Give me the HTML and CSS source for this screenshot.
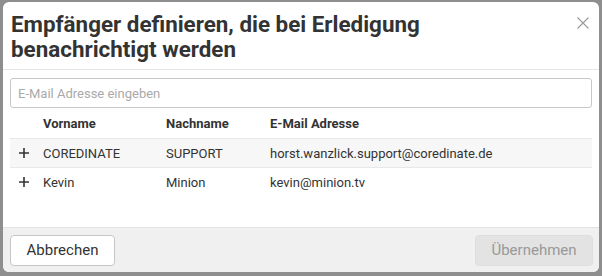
FILE: index.html
```html
<!DOCTYPE html>
<html lang="de">
<head>
<meta charset="utf-8">
<link rel="stylesheet" href="styles.css">
</head>
<body>
<div class="dialog">
  <div class="dlg-header">
    <h1 class="dlg-title">Empfänger definieren, die bei Erledigung benachrichtigt werden</h1>
    <button class="close" aria-label="Schließen">
      <svg width="12" height="12" viewBox="0 0 12 12"><path d="M0.5 0.5 L11.5 11.5 M11.5 0.5 L0.5 11.5" stroke="#9a9a9a" stroke-width="1.1" fill="none"/></svg>
    </button>
  </div>
  <div class="dlg-body">
    <input class="email-input" type="text" placeholder="E-Mail Adresse eingeben">
    <table class="people">
      <thead>
        <tr><th class="c-add"></th><th class="c-first">Vorname</th><th class="c-last">Nachname</th><th>E-Mail Adresse</th></tr>
      </thead>
      <tbody>
        <tr class="odd"><td class="c-add"><svg class="plus" width="10" height="10" viewBox="0 0 10 10"><path d="M5 0 V10 M0 5 H10" stroke="#333" stroke-width="1.6" fill="none"/></svg></td><td>COREDINATE</td><td>SUPPORT</td><td>horst.wanzlick.support@coredinate.de</td></tr>
        <tr><td class="c-add"><svg class="plus" width="10" height="10" viewBox="0 0 10 10"><path d="M5 0 V10 M0 5 H10" stroke="#333" stroke-width="1.6" fill="none"/></svg></td><td>Kevin</td><td>Minion</td><td>kevin@minion.tv</td></tr>
      </tbody>
    </table>
  </div>
  <div class="dlg-footer">
    <button class="btn btn-cancel">Abbrechen</button>
    <button class="btn btn-apply" disabled>Übernehmen</button>
  </div>
</div>
</body>
</html>
```
FILE: styles.css
```css
html, body {
  margin: 0;
  padding: 0;
}
body {
  width: 602px;
  height: 276px;
  background: #8e8e8e;
  font-family: Roboto, "Liberation Sans", sans-serif;
  overflow: hidden;
}
.dialog {
  margin: 2px 3px 0 3px;
  width: 596px;
  height: 270px;
  background: #fff;
  border-radius: 6px;
  display: flex;
  flex-direction: column;
  overflow: hidden;
}
.dlg-header {
  display: flex;
  align-items: flex-start;
  justify-content: space-between;
  padding: 10px 10px 7px 8px;
  border-bottom: 1px solid #e6e6e6;
}
.dlg-title {
  margin: 0;
  font-size: 22.4px;
  line-height: 25px;
  font-weight: 700;
  color: #333;
  width: 480px;
}
.close {
  border: 0;
  background: none;
  padding: 0;
  margin-top: 5px;
  width: 12px;
  height: 12px;
  display: flex;
}
.dlg-body {
  flex: 1;
  padding: 8px 7px 0 7px;
}
.email-input {
  box-sizing: border-box;
  display: block;
  width: 582px;
  height: 30px;
  border: 1px solid #c8c8c8;
  border-radius: 3px;
  padding: 0 7px;
  font-family: Roboto, "Liberation Sans", sans-serif;
  font-size: 13px;
  color: #333;
  outline: none;
}
.email-input::placeholder {
  color: #aaa;
}
.people {
  width: 582px;
  border-collapse: collapse;
  font-size: 13px;
  color: #333;
}
.people th {
  text-align: left;
  font-weight: 700;
  height: 30px;
  padding: 0;
  vertical-align: middle;
}
.people td {
  height: 28px;
  padding: 0;
  vertical-align: middle;
  border-top: 1px solid #e8e8e8;
}
.people tr.odd td {
  background: #f7f7f7;
}
.people .c-add {
  width: 33px;
  box-sizing: border-box;
  padding-left: 9px;
}
.plus {
  display: block;
}
.people .c-first {
  width: 123px;
}
.people .c-last {
  width: 104px;
}
.dlg-footer {
  height: 45px;
  box-sizing: border-box;
  background: #f0f0f0;
  border-top: 1px solid #e2e2e2;
  display: flex;
  align-items: center;
  justify-content: space-between;
  padding: 0 6px 0 7px;
}
.btn {
  height: 31px;
  border-radius: 4px;
  font-family: Roboto, "Liberation Sans", sans-serif;
  font-size: 15px;
  padding: 0;
}
.btn-cancel {
  width: 105px;
  background: #fff;
  border: 1px solid #c6c6c6;
  color: #333;
}
.btn-apply {
  width: 118px;
  background: #e3e3e3;
  border: 1px solid #dedede;
  color: #999;
}
```
